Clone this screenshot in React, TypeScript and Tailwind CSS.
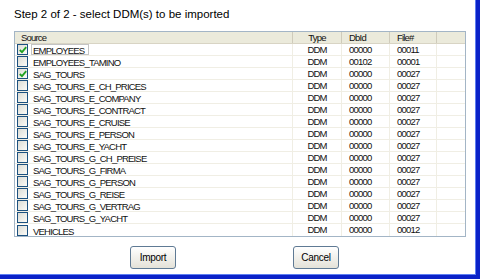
const rows = [
  { name: "EMPLOYEES", db: "00000", file: "00011", checked: true, focus: true },
  { name: "EMPLOYEES_TAMINO", db: "00102", file: "00001" },
  { name: "SAG_TOURS", db: "00000", file: "00027", checked: true },
  { name: "SAG_TOURS_E_CH_PRICES", db: "00000", file: "00027" },
  { name: "SAG_TOURS_E_COMPANY", db: "00000", file: "00027" },
  { name: "SAG_TOURS_E_CONTRACT", db: "00000", file: "00027" },
  { name: "SAG_TOURS_E_CRUISE", db: "00000", file: "00027" },
  { name: "SAG_TOURS_E_PERSON", db: "00000", file: "00027" },
  { name: "SAG_TOURS_E_YACHT", db: "00000", file: "00027" },
  { name: "SAG_TOURS_G_CH_PREISE", db: "00000", file: "00027" },
  { name: "SAG_TOURS_G_FIRMA", db: "00000", file: "00027" },
  { name: "SAG_TOURS_G_PERSON", db: "00000", file: "00027" },
  { name: "SAG_TOURS_G_REISE", db: "00000", file: "00027" },
  { name: "SAG_TOURS_G_VERTRAG", db: "00000", file: "00027" },
  { name: "SAG_TOURS_G_YACHT", db: "00000", file: "00027" },
  { name: "VEHICLES", db: "00000", file: "00012" },
];

const cols = "grid grid-cols-[278px_49px_48px_47px_1fr]";

function Checkbox({ checked }: { checked?: boolean }) {
  return (
    <span className="w-[11px] h-[11px] border border-[#1c5180] bg-gradient-to-br from-[#dcdcd5] to-[#fbfbf8] flex items-center justify-center shrink-0">
      {checked && (
        <svg width="8" height="8" viewBox="0 0 8 8">
          <path d="M0.8 4 L3 6.2 L7.2 1.2" stroke="#21a121" strokeWidth="1.8" fill="none" />
        </svg>
      )}
    </span>
  );
}

function Button({ label }: { label: string }) {
  return (
    <button className="w-[46px] h-[23px] rounded-[3px] border border-[#5f7a94] bg-gradient-to-b from-white to-[#e4e2d8] text-[10px] text-black tracking-[-0.3px]">
      {label}
    </button>
  );
}

export default function App() {
  return (
    <div className="w-[480px] h-[279px] bg-white border-r-4 border-b-4 border-[#0a22c8] font-['Liberation_Sans',sans-serif] text-black">
      <div className="h-full border-r border-b border-[#5d7ef2] px-[14px] pt-[8px] flex flex-col">
        <p className="h-[13px] leading-[13px] text-[11.5px]">
          Step 2 of 2 - select DDM(s) to be imported
        </p>

        <div className="mt-[10px] w-[452px] border border-[#a3b5c6] text-[9.5px] tracking-[-0.8px] text-[#111]">
          <div className={`${cols} h-[12px] bg-[#ebeadb] border-b border-[#d8d4c4] leading-[11px]`}>
            <div className="pl-[6px] border-r border-[#cfcbbb]">Source</div>
            <div className="text-center border-r border-[#cfcbbb]">Type</div>
            <div className="pl-[7px] border-r border-[#cfcbbb]">DbId</div>
            <div className="pl-[7px] border-r border-[#cfcbbb]">File#</div>
            <div />
          </div>
          {rows.map((r) => (
            <div key={r.name} className={`${cols} h-[12px] border-b border-[#f0eee4] last:border-b-0 leading-[11px]`}>
              <div className="flex items-center pl-[2px] border-r border-[#f0eee4]">
                <Checkbox checked={r.checked} />
                <span className={`ml-[3px] px-[1px] h-[11px] ${r.focus ? "border border-[#c4c4c4] pr-[4px]" : "border border-transparent"}`}>
                  {r.name}
                </span>
              </div>
              <div className="text-center border-r border-[#f0eee4]">DDM</div>
              <div className="pl-[7px] border-r border-[#f0eee4]">{r.db}</div>
              <div className="pl-[7px] border-r border-[#f0eee4]">{r.file}</div>
              <div />
            </div>
          ))}
        </div>

        <div className="flex mt-[9px] pl-[116px] gap-[117px]">
          <Button label="Import" />
          <Button label="Cancel" />
        </div>
      </div>
    </div>
  );
}
